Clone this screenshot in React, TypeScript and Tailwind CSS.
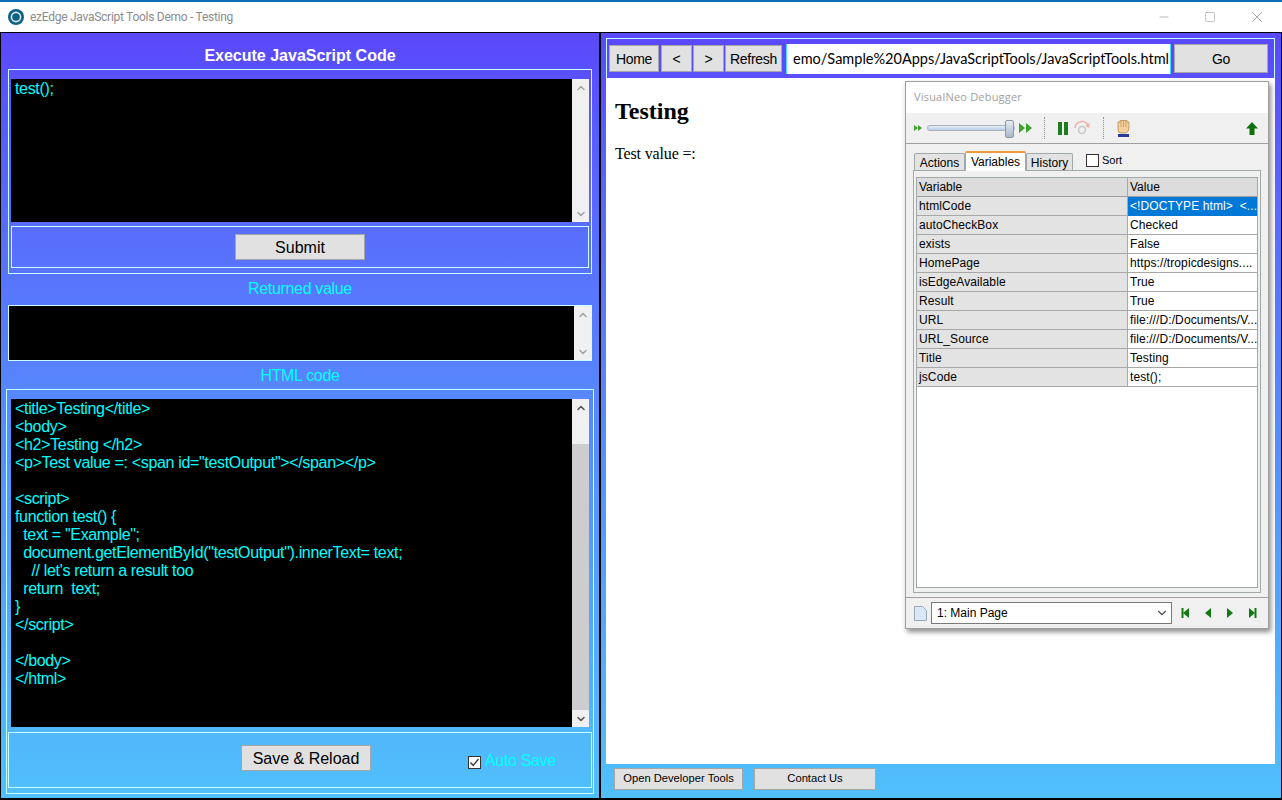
import { ChevronDown, ChevronUp, Minus, Square, X } from "lucide-react";

const sans = "font-['Liberation_Sans',Arial,sans-serif]";

const codeLines = [
  "<title>Testing</title>",
  "<body>",
  "<h2>Testing </h2>",
  '<p>Test value =: <span id="testOutput"></span></p>',
  "",
  "<script>",
  "function test() {",
  '  text = "Example";',
  '  document.getElementById("testOutput").innerText= text;',
  "    // let's return a result too",
  "  return  text;",
  "}",
  "</script>",
  "",
  "</body>",
  "</html>",
];

const variables = [
  ["htmlCode", "<!DOCTYPE html>  <..."],
  ["autoCheckBox", "Checked"],
  ["exists", "False"],
  ["HomePage", "https://tropicdesigns...."],
  ["isEdgeAvailable", "True"],
  ["Result", "True"],
  ["URL", "file:///D:/Documents/V..."],
  ["URL_Source", "file:///D:/Documents/V..."],
  ["Title", "Testing"],
  ["jsCode", "test();"],
];

const Scrollbar = ({ thumb, dark }: { thumb?: boolean; dark?: boolean }) => (
  <div className="w-[17px] shrink-0 bg-[#f0f0f0] flex flex-col items-center justify-between">
    <div className="h-[17px] flex items-center justify-center">
      <ChevronUp size={12} strokeWidth={3} className={dark ? "text-[#505050]" : "text-[#a3a3a3]"} />
    </div>
    {thumb && <div className="w-full flex-1 mt-[28px] bg-[#cdcdcd]" />}
    <div className="h-[17px] flex items-center justify-center">
      <ChevronDown size={12} strokeWidth={3} className={dark ? "text-[#505050]" : "text-[#a3a3a3]"} />
    </div>
  </div>
);

const GrayButton = ({ label, className }: { label: string; className: string }) => (
  <button className={`bg-[#e1e1e1] border border-[#a6a6a6] text-black flex items-center justify-center ${className}`}>
    {label}
  </button>
);

const Tri = ({ dir, bar }: { dir: "l" | "r"; bar?: boolean }) => (
  <svg width="10" height="12" viewBox="0 0 10 12">
    <path d={dir === "r" ? "M2 1 L8 6 L2 11 Z" : "M8 1 L2 6 L8 11 Z"} fill="#137a13" />
    {bar && <rect x={dir === "r" ? 7.5 : 0.5} y="1" width="2" height="10" fill="#137a13" />}
  </svg>
);

const Debugger = () => (
  <div className="absolute left-[905px] top-[81px] w-[364px] h-[548px] bg-[#f0f0f0] border border-[#a0a0a0] shadow-[2px_3px_5px_rgba(0,0,0,0.45)] flex flex-col font-['Liberation_Sans',Arial,sans-serif] text-[12px] text-black">
    <div className="h-[31px] shrink-0 bg-white flex items-center pl-[8px] font-['Open_Sans',sans-serif] text-[11px] tracking-[0.2px] text-[#a0a0a0]">
      VisualNeo Debugger
    </div>
    <div className="h-[31px] shrink-0 border-b border-[#a0a0a0] relative flex items-center pl-[8px]">
      <svg width="10" height="8" viewBox="0 0 10 8">
        <path d="M0 1 L4 4 L0 7 Z M4 1 L8 4 L4 7 Z" fill="#3aa52a" />
      </svg>
      <div className="relative w-[88px] h-[6px] ml-[3px] rounded-full bg-gradient-to-b from-[#e8eef4] to-[#b4cde6] border border-[#aab4be]">
        <div className="absolute right-0 -top-[6px] w-[9px] h-[18px] rounded-[2px] bg-gradient-to-b from-[#e4ebf2] to-[#a9b9cb] border border-[#8c98a6]" />
      </div>
      <svg width="14" height="12" viewBox="0 0 14 12" className="ml-[4px]">
        <path d="M0 1 L6 6 L0 11 Z M7 1 L13 6 L7 11 Z" fill="#3aa52a" />
      </svg>
      <div className="h-[22px] ml-[11px] border-l border-dotted border-[#909090]" />
      <svg width="12" height="13" viewBox="0 0 12 13" className="ml-[12px]">
        <path d="M1 0h4v13H1z M7 0h4v13H7z" fill="#1c7d1c" />
      </svg>
      <svg width="18" height="16" viewBox="0 0 18 16" className="ml-[4px]">
        <path d="M2 8 A7 7 0 0 1 15 5" fill="none" stroke="#eeb4a8" strokeWidth="1.6" />
        <path d="M17 3 L16 8 L12 6 Z" fill="#eeb4a8" />
        <circle cx="9" cy="10" r="3.5" fill="none" stroke="#c8c8c8" strokeWidth="1.6" />
      </svg>
      <div className="h-[22px] ml-[12px] border-l border-dotted border-[#909090]" />
      <svg width="14" height="19" viewBox="0 0 14 19" className="ml-[12px]">
        <path d="M2 4 V11 Q2 14 5 14 H10 Q13 13 13 8 V3 H11 V1.5 H4 V3 H2 Z" fill="#f3cf9c" stroke="#b98d55" strokeWidth="0.8" />
        <path d="M5 2 V8 M7.5 2 V8 M10 2 V8" fill="none" stroke="#b98d55" strokeWidth="0.7" />
        <rect x="2" y="15" width="11" height="3" fill="#2a3a9a" />
      </svg>
      <svg width="12" height="13" viewBox="0 0 12 13" className="absolute right-[10px] top-[9px]">
        <path d="M6 0 L12 6.5 H8.5 V13 H3.5 V6.5 H0 Z" fill="#0d700d" />
      </svg>
    </div>
    <div className="flex-1 px-[7px] pt-[6px] flex flex-col min-h-0 relative">
      <div className="flex items-end h-[20px] pl-[1px] text-[12px] shrink-0">
        <div className="h-[17px] w-[51px] pt-[1px] bg-[#e3e3e3] border border-b-0 border-[#a0a8a8] rounded-t-[2px] flex items-center justify-center">Actions</div>
        <div className="h-[20px] w-[61px] bg-white border border-b-0 border-[#a0a8a8] border-t-2 border-t-[#ec9a3c] rounded-t-[2px] flex items-center justify-center relative top-[1px] z-10">Variables</div>
        <div className="h-[17px] w-[47px] pt-[1px] bg-[#e3e3e3] border border-b-0 border-[#a0a8a8] rounded-t-[2px] flex items-center justify-center">History</div>
        <div className="ml-[13px] w-[13px] h-[13px] bg-white border border-[#333] self-center" />
        <div className="ml-[3px] self-center text-[11px]">Sort</div>
      </div>
      <div className="flex-1 bg-[#f0f0f0] border border-[#a0a8a8] px-[2px] pt-[6px] pb-[4px] min-h-0">
        <div className="h-full bg-white border border-[#a0a8a8]">
          <div className="grid grid-cols-[211px_129px] h-[19px] bg-[#dcdcdc] border-b border-[#a0a0a0] leading-[19px]">
            <div className="pl-[2px] border-r border-[#a8a8a8]">Variable</div>
            <div className="pl-[2px]">Value</div>
          </div>
          {variables.map(([name, value], i) => (
            <div key={name} className="grid grid-cols-[211px_129px] h-[19px] leading-[18px] tracking-[0.1px] whitespace-pre">
              <div className="pl-[2px] bg-[#e3e3e3] border-b border-r border-[#a8a8a8]">{name}</div>
              <div className={i === 0 ? "pl-[2px] bg-[#0078d7] text-white" : "pl-[2px] bg-white border-b border-[#a8a8a8]"}>{value}</div>
            </div>
          ))}
        </div>
      </div>
    </div>
    <div className="h-[31px] shrink-0 mt-[4px] border-t border-[#a0a0a0] flex items-center pl-[8px] relative">
      <svg width="13" height="15" viewBox="0 0 13 15">
        <path d="M0.5 0.5 H8.5 L12.5 4.5 V14.5 H0.5 Z" fill="#d8e8f6" stroke="#9aa8b4" />
      </svg>
      <div className="ml-[4px] w-[241px] h-[22px] bg-white border border-[#7a7a7a] flex items-center justify-between pl-[5px] pr-[2px]">
        <span>1: Main Page</span>
        <ChevronDown size={14} className="text-[#505050]" />
      </div>
      <div className="ml-[9px] flex gap-[12px]">
        <Tri dir="l" bar />
        <Tri dir="l" />
        <Tri dir="r" />
        <Tri dir="r" bar />
      </div>
    </div>
  </div>
);

export default function App() {
  return (
    <div className={`w-[1282px] h-[800px] relative overflow-hidden bg-white flex flex-col ${sans}`}>
      <div className="h-[32px] shrink-0 bg-white border-t-2 border-[#0a6fb4] flex items-center">
        <svg width="16" height="16" viewBox="0 0 16 16" className="ml-[8px]">
          <circle cx="8" cy="8" r="8" fill="#0d5f85" />
          <circle cx="8" cy="8" r="4.6" fill="none" stroke="#d8e8ee" strokeWidth="1.6" />
          <circle cx="8" cy="8" r="2" fill="#0d5f85" />
        </svg>
        <div className="ml-[6px] font-['Roboto',sans-serif] text-[12px] tracking-[-0.27px] text-[#8c8c8c]">ezEdge JavaScript Tools Demo - Testing</div>
        <div className="ml-auto flex items-center text-[#8a8a8a]">
          <Minus size={14} strokeWidth={1} className="mr-[33px]" />
          <Square size={12} strokeWidth={1} className="mr-[32px]" />
          <X size={18} strokeWidth={1} className="mr-[16px]" />
        </div>
      </div>

      <div className="flex-1 border border-b-2 border-black bg-gradient-to-b from-[#5a48fb] to-[#50c0fb] flex min-h-0">
        {/* left panel */}
        <div className="w-[600px] shrink-0 border-r-2 border-black flex flex-col items-center text-[16px] relative">
          <div className="h-[36px] pt-[14px] text-white font-bold leading-[18px]">Execute JavaScript Code</div>
          <div className="w-[584px] h-[205px] border border-[#c8ffff] p-[2px] pt-[9px] flex flex-col mt-0 tracking-[-0.33px]">
            <div className="h-[143px] flex bg-black shrink-0">
              <div className="flex-1 px-[4px] pt-[1px] text-[#00ffff] leading-[18px]">test();</div>
              <Scrollbar />
            </div>
            <div className="mt-[4px] h-[42px] border border-[#c8ffff] flex items-center justify-center">
              <GrayButton label="Submit" className="w-[130px] h-[26px] pt-[1px] tracking-normal" />
            </div>
          </div>
          <div className="h-[31px] pb-[2px] flex items-center text-[#00ffff] tracking-[-0.33px]">Returned value</div>
          <div className="w-[584px] h-[56px] flex bg-black border border-[#c8ffff] shrink-0">
            <div className="flex-1" />
            <Scrollbar />
          </div>
          <div className="h-[28px] pt-[1px] flex items-center text-[#00ffff] tracking-[-0.33px]">HTML code</div>
          <div className="w-[588px] h-[405px] border border-[#c8ffff] pt-[9px] px-[1px] flex flex-col items-center">
            <div className="w-[578px] h-[328px] flex bg-black shrink-0">
              <div className="flex-1 px-[4px] pt-[1px] text-[#00ffff] leading-[18px] whitespace-pre tracking-[-0.33px]">
                {codeLines.map((line, i) => (
                  <div key={i} className="h-[18px]">{line}</div>
                ))}
              </div>
              <Scrollbar thumb dark />
            </div>
            <div className="mt-[5px] w-[584px] h-[56px] border border-[#c8ffff] flex items-center relative">
              <GrayButton label="Save & Reload" className="w-[130px] h-[26px] pt-[1px] ml-[232px] mb-[4px]" />
              <div className="ml-[97px] mt-[4px] w-[13px] h-[13px] bg-white border border-[#333] flex items-center justify-center">
                <svg width="11" height="11" viewBox="0 0 11 11">
                  <path d="M1.5 5.5 L4.2 8.5 L9.5 2" fill="none" stroke="#333" strokeWidth="1.3" />
                </svg>
              </div>
              <span className="ml-[4px] mt-[2px] text-[#00ffff] tracking-[-0.33px]">Auto Save</span>
            </div>
          </div>
        </div>

        {/* right panel */}
        <div className="flex-1 flex flex-col pl-[5px] pr-[6px] pb-[3px] pt-[5px]">
          <div className="h-[40px] shrink-0 border-x border-t border-[#c8ffff] bg-gradient-to-b from-[#5a48fb] to-[#5a50fb] flex items-center pl-[2px] pr-[6px] text-[14px] tracking-[-0.3px]">
            <GrayButton label="Home" className="w-[50px] h-[27px] pt-[1px]" />
            <GrayButton label="<" className="w-[31px] h-[27px] pt-[1px] ml-[2px]" />
            <GrayButton label=">" className="w-[31px] h-[27px] pt-[1px] ml-[1px]" />
            <GrayButton label="Refresh" className="w-[57px] h-[27px] pt-[1px] ml-[1px]" />
            <div className="ml-[4px] w-[385px] h-[30px] bg-white border-x border-[#40e0f0] overflow-hidden flex items-center justify-end pr-[1px] font-['Lato',sans-serif] text-[14.5px] tracking-normal text-black whitespace-nowrap">
              emo/Sample%20Apps/JavaScriptTools/JavaScriptTools.html
            </div>
            <GrayButton label="Go" className="ml-[3px] w-[94px] h-[29px] pt-[1px]" />
          </div>
          <div className="flex-1 bg-white font-['Liberation_Serif',serif] text-black px-[9px] min-h-0">
            <div className="text-[24px] font-bold mt-[19px] leading-[28px]">Testing</div>
            <div className="text-[16px] mt-[20px] leading-[18px] tracking-[-0.15px]">Test value =:</div>
          </div>
          <div className="h-[31px] shrink-0 flex items-center pl-[8px] pb-[2px] text-[11.2px]">
            <GrayButton label="Open Developer Tools" className="w-[129px] h-[22px]" />
            <GrayButton label="Contact Us" className="w-[122px] h-[22px] ml-[11px]" />
          </div>
        </div>
      </div>
      <Debugger />
    </div>
  );
}
